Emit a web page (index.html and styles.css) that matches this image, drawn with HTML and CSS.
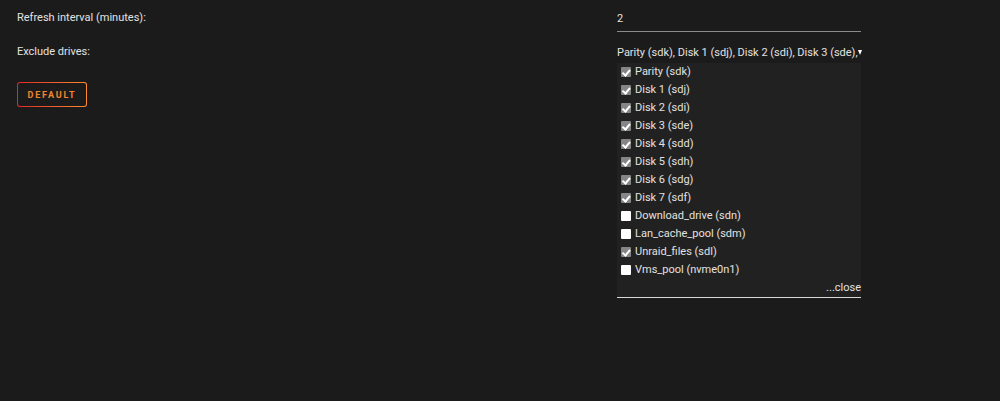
FILE: index.html
```html
<!DOCTYPE html>
<html lang="en">
<head>
    <meta charset="utf-8" />
    <title>Disk settings</title>
    <link rel="stylesheet" href="styles.css">
</head>
<body>
    <form class="settings">
        <div class="row">
            <label class="label">Refresh interval (minutes):</label>
            <input class="text-input" type="text" value="2">
        </div>

        <div class="row row-drives">
            <label class="label">Exclude drives:</label>
            <div class="dropdown">
                <div class="dropdown-head">
                    <span class="dropdown-value">Parity (sdk), Disk 1 (sdj), Disk 2 (sdi), Disk 3 (sde),</span>
                    <span class="caret"></span>
                </div>
                <ul class="dropdown-list">
                    <li><label><input type="checkbox" checked> Parity (sdk)</label></li>
                    <li><label><input type="checkbox" checked> Disk 1 (sdj)</label></li>
                    <li><label><input type="checkbox" checked> Disk 2 (sdi)</label></li>
                    <li><label><input type="checkbox" checked> Disk 3 (sde)</label></li>
                    <li><label><input type="checkbox" checked> Disk 4 (sdd)</label></li>
                    <li><label><input type="checkbox" checked> Disk 5 (sdh)</label></li>
                    <li><label><input type="checkbox" checked> Disk 6 (sdg)</label></li>
                    <li><label><input type="checkbox" checked> Disk 7 (sdf)</label></li>
                    <li><label><input type="checkbox"> Download_drive (sdn)</label></li>
                    <li><label><input type="checkbox"> Lan_cache_pool (sdm)</label></li>
                    <li><label><input type="checkbox" checked> Unraid_files (sdl)</label></li>
                    <li><label><input type="checkbox"> Vms_pool (nvme0n1)</label></li>
                    <li class="close">...close</li>
                </ul>
            </div>
        </div>

        <div class="actions">
            <button type="button" class="button">Default</button>
        </div>
    </form>
</body>
</html>
```

FILE: styles.css
```css
html, body {
    height: 100%;
}

body {
    margin: 0;
    background: #1c1b1b;
    color: #e4e2e0;
    font-family: Roboto, "Open Sans", sans-serif;
    font-size: 11px;
}

.settings {
    display: flex;
    flex-direction: column;
    padding: 10px 0 0 17px;
}

.row {
    display: grid;
    grid-template-columns: 600px 244px;
    align-items: start;
}

.label {
    line-height: 16px;
}

.text-input {
    box-sizing: border-box;
    height: 22px;
    padding: 0 0 4px 0;
    border: 0;
    border-bottom: 1px solid #8a8a8a;
    background: transparent;
    color: #e4e2e0;
    font: inherit;
    outline: none;
}

.row-drives {
    margin-top: 12px;
}

.dropdown {
    position: relative;
}

.dropdown-head {
    display: flex;
    align-items: center;
    height: 18px;
}

.dropdown-value {
    flex: 1;
    white-space: nowrap;
    line-height: 18px;
}

.caret {
    width: 0;
    height: 0;
    margin: 0 0 2px 0;
    border-left: 2.5px solid transparent;
    border-right: 2.5px solid transparent;
    border-top: 5px solid #fff;
}

/* open list of drives, drawn over the rest of the form */
.dropdown-list {
    position: absolute;
    top: 19px;
    left: 0;
    right: 0;
    z-index: 2;
    margin: 0;
    padding: 0;
    list-style: none;
    background: #212121;
    border-bottom: 1px solid #d8d8d8;
}

.dropdown-list li {
    height: 18px;
    line-height: 18px;
}

.dropdown-list label {
    display: flex;
    align-items: center;
    gap: 4px;
    padding-left: 4px;
}

.dropdown-list input {
    appearance: none;
    box-sizing: border-box;
    width: 10px;
    height: 10px;
    margin: 0;
    border-radius: 1px;
    background: #fff;
    position: relative;
}

.dropdown-list input:checked {
    background: #858585;
}

.dropdown-list input:checked::after {
    content: "";
    position: absolute;
    left: 3px;
    top: 0.5px;
    width: 2.5px;
    height: 5.5px;
    border: solid #fff;
    border-width: 0 2px 2px 0;
    transform: rotate(40deg);
}

.dropdown-list .close {
    text-align: right;
}

.actions {
    margin-top: 20px;
}

.button {
    box-sizing: border-box;
    width: 70px;
    height: 25px;
    padding: 0;
    border: 1px solid transparent;
    border-radius: 3px;
    background:
        linear-gradient(#1c1b1b, #1c1b1b) padding-box,
        linear-gradient(90deg, #e22828, #ff8c2f) border-box;
    color: #f2852f;
    font-family: inherit;
    font-size: 9px;
    font-weight: bold;
    letter-spacing: 1.8px;
    text-transform: uppercase;
    cursor: pointer;
}
```
